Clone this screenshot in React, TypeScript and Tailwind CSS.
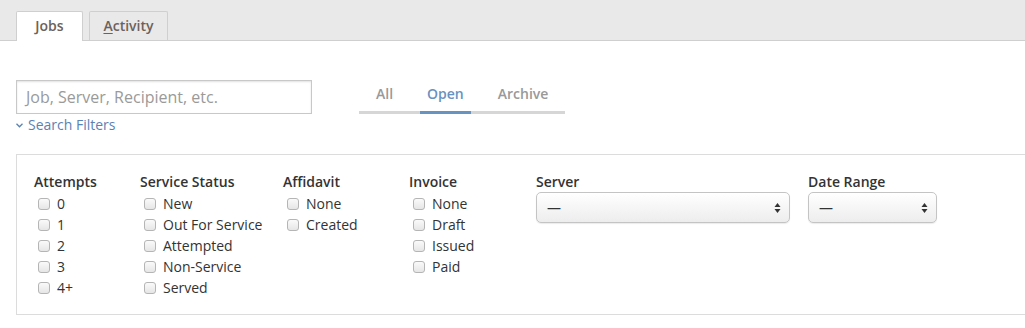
import React from "react";

const font = { fontFamily: '"Open Sans", "Noto Sans", sans-serif' };

function Check({ label }: { label: string }) {
  return (
    <label className="flex h-[21px] items-center gap-[7px] pl-[4px] text-[14px] text-[#333]">
      <span className="block h-[12px] w-[12px] rounded-[3px] border border-[#b5b5b5] bg-gradient-to-b from-[#fafafa] to-[#e6e6e6]" />
      <span>{label}</span>
    </label>
  );
}

function Group({ title, items, width }: { title: string; items: string[]; width: string }) {
  return (
    <div className={width}>
      <div className="mb-[1px] text-[14px] font-semibold leading-[20px] text-[#333]">{title}</div>
      {items.map((i) => (
        <Check key={i} label={i} />
      ))}
    </div>
  );
}

function Select({ width }: { width: string }) {
  return (
    <div
      className={`${width} flex h-[31px] items-center justify-between rounded-[5px] border border-[#c4c4c4] bg-gradient-to-b from-[#ffffff] to-[#ededed] pl-[10px] pr-[8px] shadow-[0_1px_1px_rgba(0,0,0,0.08)]`}
    >
      <span className="text-[14px] text-[#333]">—</span>
      <svg width="7" height="12" viewBox="0 0 7 12">
        <path d="M3.5 1 L6.5 5 L0.5 5 Z" fill="#333" />
        <path d="M3.5 11 L6.5 7 L0.5 7 Z" fill="#333" />
      </svg>
    </div>
  );
}

export default function App() {
  return (
    <div className="h-[328px] w-[1025px] overflow-hidden bg-white" style={font}>
      {/* Top tabs */}
      <div className="flex h-[41px] items-end gap-[6px] border-b border-[#cfcfcf] bg-[#e9e9e9] pl-[16px]">
        <div className="-mb-px flex h-[30px] w-[67px] items-center justify-center rounded-t-[2px] border border-b-0 border-[#cfcfcf] bg-white pb-[2px] text-[14px] font-semibold text-[#6d625a]">
          Jobs
        </div>
        <div className="flex h-[29px] w-[79px] items-center justify-center rounded-t-[2px] border border-b-0 border-[#cfcfcf] bg-[#e9e9e9] pb-[1px] text-[14px] font-semibold text-[#6d625a]">
          <span>
            <span className="underline underline-offset-2">A</span>ctivity
          </span>
        </div>
      </div>

      {/* Search row */}
      <div className="flex items-start pl-[16px] pt-[39px]">
        <div>
          <div className="flex h-[34px] w-[296px] items-center border border-[#c8c8c8] pl-[9px] text-[16px] text-[#9a9a9a] shadow-[inset_0_1px_2px_rgba(0,0,0,0.12)]">
            Job, Server, Recipient, etc.
          </div>
          <div className="flex items-center gap-[5px] text-[14px] text-[#5a82b5]">
            <svg width="7" height="5" viewBox="0 0 7 5" className="mt-[1px]">
              <path d="M0.5 0.8 L3.5 3.8 L6.5 0.8" stroke="#5a82b5" strokeWidth="1.3" fill="none" />
            </svg>
            <span>Search Filters</span>
          </div>
        </div>
        <div className="ml-[47px] mt-[1px] flex h-[33px] items-start border-b-[3px] border-[#d6d6d6] pl-[17px] pr-[17px] pt-[3px] text-[14px] font-semibold leading-[20px]">
          <div className="text-[#999]">All</div>
          <div className="ml-[27px] h-[30px] border-b-[3px] border-[#6892bf] px-[7px] text-[#6892bf]">Open</div>
          <div className="ml-[27px] text-[#999]">Archive</div>
        </div>
      </div>

      {/* Filter panel */}
      <div className="ml-[16px] mt-[19px] flex h-[161px] border border-r-0 border-[#dcdcdc] pl-[17px] pt-[17px]">
        <Group title="Attempts" items={["0", "1", "2", "3", "4+"]} width="w-[106px]" />
        <Group
          title="Service Status"
          items={["New", "Out For Service", "Attempted", "Non-Service", "Served"]}
          width="w-[143px]"
        />
        <Group title="Affidavit" items={["None", "Created"]} width="w-[126px]" />
        <Group title="Invoice" items={["None", "Draft", "Issued", "Paid"]} width="w-[127px]" />
        <div className="w-[272px]">
          <div className="text-[14px] font-semibold leading-[20px] text-[#333]">Server</div>
          <Select width="w-[254px]" />
        </div>
        <div>
          <div className="text-[14px] font-semibold leading-[20px] text-[#333]">Date Range</div>
          <Select width="w-[129px]" />
        </div>
      </div>
    </div>
  );
}
